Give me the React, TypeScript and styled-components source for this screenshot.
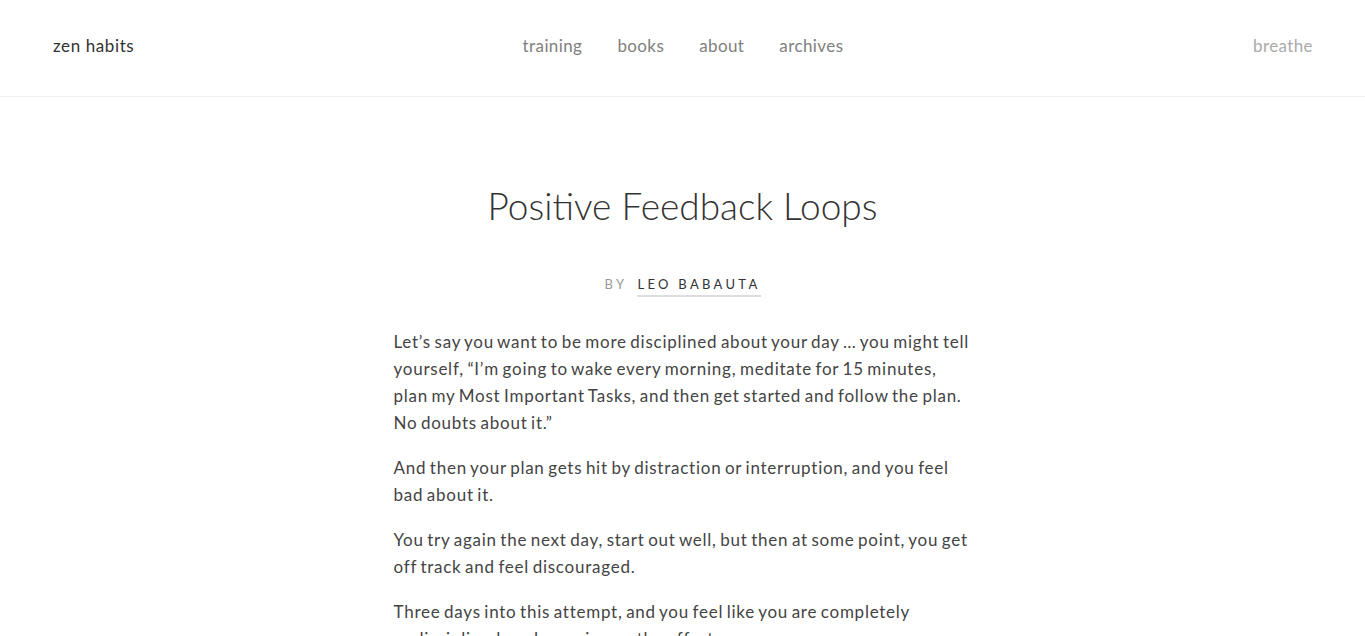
import React from 'react';
import styled, { createGlobalStyle } from 'styled-components';

const GlobalStyle = createGlobalStyle`
  html, body {
    margin: 0;
    padding: 0;
    background: #ffffff;
  }
  body {
    font-family: Lato, 'Noto Sans', sans-serif;
    color: #444444;
    overflow: hidden;
  }
`;

const Header = styled.header`
  height: 97px;
  border-bottom: 1px solid #f0f0f0;
  display: grid;
  grid-template-columns: 1fr auto 1fr;
  align-items: center;
  padding: 0 52px 0 53px;
  box-sizing: border-box;
`;

const Logo = styled.a`
  font-size: 17px;
  letter-spacing: 0.6px;
  color: #333333;
  text-decoration: none;
  margin-top: -6px;
`;

const Nav = styled.nav`
  display: flex;
  gap: 35px;
  margin-top: -5px;
`;

const NavLink = styled.a<{ $light?: boolean }>`
  font-size: 17px;
  letter-spacing: 0.4px;
  color: ${p => (p.$light ? '#aaaaaa' : '#808080')};
  text-decoration: none;
`;

const Right = styled.div`
  justify-self: end;
  margin-top: -6px;
`;

const Article = styled.article`
  max-width: 578px;
  margin: 0 auto;
  padding-top: 85px;
`;

const Title = styled.h1`
  font-size: 37px;
  font-weight: 300;
  color: #333333;
  text-align: center;
  margin: 0;
  line-height: 48px;
`;

const Byline = styled.div`
  text-align: center;
  margin-top: 46px;
  margin-bottom: 36px;
  font-size: 13px;
  letter-spacing: 3.3px;
  color: #999999;
`;

const Author = styled.a`
  color: #333333;
  text-decoration: none;
  border-bottom: 2px solid #dddddd;
  padding-bottom: 3px;
  margin-left: 4px;
`;

const Paragraph = styled.p`
  font-size: 17px;
  line-height: 27px;
  letter-spacing: 0.75px;
  word-spacing: -1.5px;
  margin: 0 0 18px;
  color: #444444;
`;

export default function App() {
  return (
    <>
      <GlobalStyle />
      <Header>
        <Logo href="#">zen habits</Logo>
        <Nav>
          <NavLink href="#">training</NavLink>
          <NavLink href="#">books</NavLink>
          <NavLink href="#">about</NavLink>
          <NavLink href="#">archives</NavLink>
        </Nav>
        <Right>
          <NavLink href="#" $light>breathe</NavLink>
        </Right>
      </Header>
      <Article>
        <Title>Positive Feedback Loops</Title>
        <Byline>
          BY <Author href="#">LEO BABAUTA</Author>
        </Byline>
        <Paragraph>
          Let’s say you want to be more disciplined about your day … you might tell yourself, “I’m going to wake every morning, meditate for 15 minutes, plan my Most Important Tasks, and then get started and follow the plan. No doubts about it.”
        </Paragraph>
        <Paragraph>
          And then your plan gets hit by distraction or interruption, and you feel bad about it.
        </Paragraph>
        <Paragraph>
          You try again the next day, start out well, but then at some point, you get off track and feel discouraged.
        </Paragraph>
        <Paragraph>
          Three days into this attempt, and you feel like you are completely undisciplined, and you give up the effort.
        </Paragraph>
      </Article>
    </>
  );
}
